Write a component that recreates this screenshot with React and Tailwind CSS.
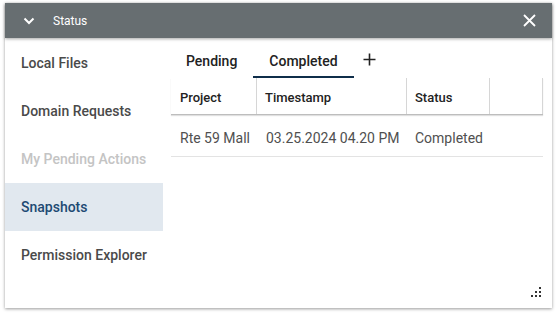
import React from 'react';

const NAV = [
  { label: 'Local Files' },
  { label: 'Domain Requests' },
  { label: 'My Pending Actions', disabled: true },
  { label: 'Snapshots', active: true },
  { label: 'Permission Explorer' },
];

const App = () => {
  return (
    <div className="w-[558px] h-[315px] bg-white pl-[5px] pt-[3px]" style={{ fontFamily: 'Roboto, "Noto Sans", sans-serif' }}>
      <div className="w-[547px] h-[305px] bg-white flex flex-col shadow-[0_1px_3px_rgba(0,0,0,0.4)]">
        {/* header */}
        <div className="h-[35px] bg-[#676e71] flex items-center pl-[18px] pr-[16px] text-white shadow-[0_1px_3px_rgba(0,0,0,0.35)] relative z-10">
          <svg width="12" height="8" viewBox="0 0 12 8" className="mr-[18px]">
            <path d="M1.5 1.5 L6 6 L10.5 1.5" stroke="white" strokeWidth="2" fill="none" />
          </svg>
          <span className="text-[12px]">Status</span>
          <svg width="13" height="13" viewBox="0 0 13 13" className="ml-auto">
            <path d="M1 1 L12 12 M12 1 L1 12" stroke="white" strokeWidth="1.8" />
          </svg>
        </div>

        <div className="flex flex-1 pt-[1px]">
          {/* sidebar */}
          <div className="w-[158px] flex flex-col">
            {NAV.map((item) => (
              <div
                key={item.label}
                className={`h-[48px] flex items-center pl-[16px] pt-[1px] text-[14px] font-medium ${
                  item.active ? 'bg-[#e1e8ef] text-[#1d4a73]' : item.disabled ? 'text-[#c4c4c4]' : 'text-[#4a4a4a]'
                }`}
              >
                {item.label}
              </div>
            ))}
          </div>

          {/* content */}
          <div className="flex-1 flex flex-col pl-[7px] pr-[9px] relative">
            <div className="h-[39px] flex items-stretch text-[14px] text-[#222] font-medium">
              <div className="px-[16px] flex items-end pb-[6px]">Pending</div>
              <div className="px-[16px] flex items-end pb-[4px] border-b-2 border-[#0f2e4a]">Completed</div>
              <div className="px-[9px] flex items-end pb-[12px]">
                <svg width="13" height="13" viewBox="0 0 13 13">
                  <path d="M6.5 0.5 V12.5 M0.5 6.5 H12.5" stroke="#222" strokeWidth="1.6" />
                </svg>
              </div>
            </div>

            <div className="ml-[1px] w-[372px]">
              <div className="flex h-[37px] text-[13px] font-medium text-[#222] border-b border-[#bdbdbd] shadow-[0_1px_1px_rgba(0,0,0,0.12)]">
                <div className="w-[86px] flex items-center pl-[9px] pt-[3px] border-r border-[#d6d6d6]">Project</div>
                <div className="w-[150px] flex items-center pl-[8px] pt-[3px] border-r border-[#d6d6d6]">Timestamp</div>
                <div className="w-[83px] flex items-center pl-[8px] pt-[3px] border-r border-[#d6d6d6]">Status</div>
                <div className="flex-1 border-r border-[#d6d6d6]"></div>
              </div>
              <div className="flex h-[42px] text-[14px] text-[#505050] border-b border-[#e3e3e3]">
                <div className="w-[86px] flex items-center pl-[9px] pt-[5px]">Rte 59 Mall</div>
                <div className="w-[150px] flex items-center pl-[9px] pt-[5px]">03.25.2024 04.20 PM</div>
                <div className="w-[83px] flex items-center pl-[8px] pt-[5px]">Completed</div>
                <div className="flex-1"></div>
              </div>
            </div>

            {/* resize grip */}
            <svg width="12" height="12" viewBox="0 0 12 12" className="absolute right-[10px] bottom-[10px]">
              <rect x="9" y="1" width="2" height="2" fill="#333" />
              <rect x="5" y="5" width="2" height="2" fill="#333" />
              <rect x="9" y="5" width="2" height="2" fill="#333" />
              <rect x="1" y="9" width="2" height="2" fill="#333" />
              <rect x="5" y="9" width="2" height="2" fill="#333" />
              <rect x="9" y="9" width="2" height="2" fill="#333" />
            </svg>
          </div>
        </div>
      </div>
    </div>
  );
};

export default App;
